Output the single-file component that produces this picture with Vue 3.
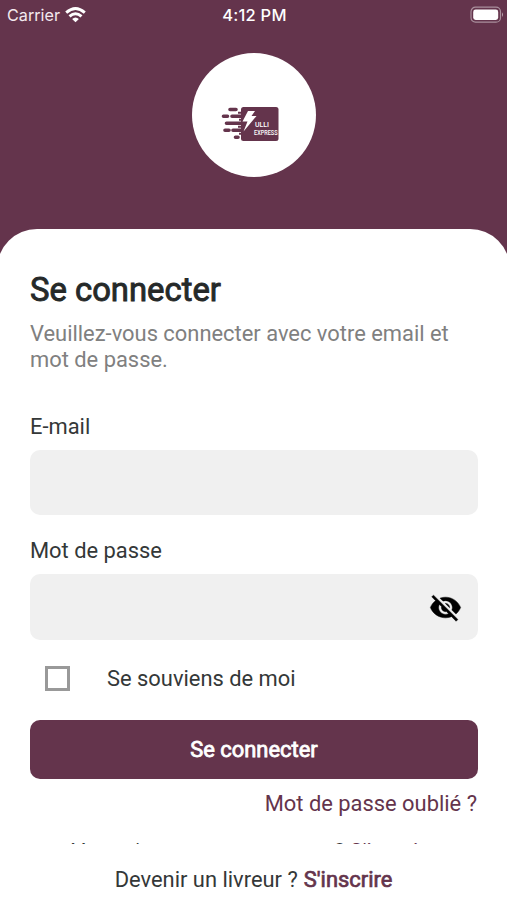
<script setup>
import { ref } from 'vue'

const email = ref('')
const password = ref('')
const remember = ref(false)
const visible = ref(false)
</script>

<template>
  <main class="screen">
    <header class="status">
      <div class="carrier">
        <span>Carrier</span>
        <svg width="21" height="16" viewBox="0 0 21 16" fill="none" stroke="#fff" stroke-width="2.9">
          <path d="M1.2 5.700Q10.500-2.600 19.800 5.700" />
          <path d="M4.500 9.400Q10.500 4.100 16.500 9.400" />
          <path d="M7.100 12Q10.500 9 13.900 12L10.500 15.300Z" fill="#fff" stroke="none" />
        </svg>
      </div>
      <span class="time">4:12 PM</span>
      <svg class="battery" width="34" height="18" viewBox="0 0 34 18">
        <rect x="1" y="1.2" width="29.5" height="15" rx="4.5" fill="none" stroke="#fff" stroke-opacity=".45" stroke-width="1.2" />
        <rect x="3.200" y="3.500" width="25" height="10.500" rx="2.4" fill="#fff" />
        <path d="M32 6.3Q34 8.7 32 11Z" fill="#fff" fill-opacity=".55" />
      </svg>
    </header>

    <div class="hero">
      <div class="logo">
        <svg width="58" height="36" viewBox="0 0 58 36">
          <g fill="none" stroke="#64344c" stroke-width="3.6" stroke-linecap="round">
            <path d="M9 3.5H15M2.5 10.3H6.5M11 10.3H20M5.500 17.300H20M4 24.200H8M12 24.200H20M14.500 31.300H17" />
          </g>
          <rect x="20" y="1" width="37.500" height="34" rx="2.5" fill="#64344c" />
          <path d="M20 6.800H17M20 13.700H18M20 20.800H17M20 27.700H18" stroke="#64344c" stroke-width="2" />
          <path d="M27 5H34L30.500 10H35.500L22.500 25.500L26.500 15.500H21.500Z" fill="#fff" />
          <text class="brand" x="34" y="20.500" textLength="14" lengthAdjust="spacingAndGlyphs">ULLI</text>
          <text class="brand" x="33" y="29" textLength="23.500" lengthAdjust="spacingAndGlyphs">EXPRESS</text>
        </svg>
      </div>
    </div>

    <form class="sheet" @submit.prevent>
      <h1>Se connecter</h1>
      <p class="intro">Veuillez-vous connecter avec votre email et mot de passe.</p>

      <label for="email">E-mail</label>
      <div class="field"><input id="email" v-model="email" type="email" /></div>

      <label for="password">Mot de passe</label>
      <div class="field">
        <input id="password" v-model="password" :type="visible ? 'text' : 'password'" />
        <button class="eye" type="button" @click="visible = !visible">
          <svg width="33" height="33" viewBox="0 0 24 24" stroke="#000" stroke-width=".35">
            <path d="M12 7c2.760 0 5 2.240 5 5 0 .650-.130 1.260-.360 1.830l2.920 2.920c1.510-1.260 2.700-2.890 3.430-4.750-1.730-4.390-6-7.500-11-7.500-1.400 0-2.740.250-3.980.700l2.160 2.160C10.740 7.130 11.350 7 12 7zM2 4.270l2.280 2.280.460.460C3.080 8.300 1.780 10.020 1 12c1.730 4.390 6 7.500 11 7.500 1.550 0 3.030-.300 4.380-.840l.420.420L19.730 22 21 20.730 3.270 3 2 4.270zM7.530 9.800l1.550 1.550c-.050.210-.080.430-.080.650 0 1.660 1.340 3 3 3 .220 0 .440-.030.650-.080l1.550 1.550c-.670.330-1.410.530-2.200.530-2.760 0-5-2.240-5-5 0-.790.200-1.530.530-2.200zm4.310-.780l3.150 3.150.020-.160c0-1.660-1.340-3-3-3l-.170.010z" />
          </svg>
        </button>
      </div>

      <label class="remember">
        <input v-model="remember" type="checkbox" />
        <span>Se souviens de moi</span>
      </label>

      <button class="submit" type="submit">Se connecter</button>
      <a class="forgot">Mot de passe oublié ?</a>
      <p class="signup">Vous n'avez pas un compte ? <a>S'inscrire</a></p>
    </form>

    <footer>
      <span>Devenir un livreur ?</span>
      <a>S'inscrire</a>
    </footer>
  </main>
</template>

<style>
body {
  margin: 0;
}
</style>

<style scoped>
.screen {
  box-sizing: border-box;
  width: 507px;
  height: 900px;
  display: flex;
  flex-direction: column;
  overflow: hidden;
  background: #64344c;
  color: #343838;
  font: 21.9px/26px Roboto, sans-serif;
}
.status {
  height: 30px;
  flex: none;
  display: grid;
  grid-template-columns: 1fr auto 1fr;
  align-items: center;
  padding: 0 3px 0 7px;
  color: #fff;
  font: 16.5px/30px Inter, sans-serif;
}
.carrier {
  display: flex;
  align-items: center;
  gap: 5px;
  font-size: 16.2px;
  color: #f3e9ef;
}
.time {
  margin-right: 2px;
  font-weight: 500;
  letter-spacing: 0.2px;
}
.battery {
  justify-self: end;
}
.hero {
  height: 199px;
  flex: none;
  box-sizing: border-box;
  padding-top: 23px;
}
.logo {
  width: 124px;
  height: 124px;
  margin: 0 auto;
  border-radius: 50%;
  background: #fff;
  display: flex;
  align-items: center;
  justify-content: center;
  box-sizing: border-box;
  padding: 17px 8px 0 0;
}
.brand {
  font: 500 7px Roboto, sans-serif;
  fill: #fff;
}
.sheet {
  height: 615px;
  flex: none;
  box-sizing: border-box;
  overflow: hidden;
  display: flex;
  flex-direction: column;
  margin: 0 -3px;
  padding: 42px 32px 0 33px;
  border-radius: 40px 40px 0 0;
  background: #fff;
}
h1 {
  margin: 0;
  font-size: 32.8px;
  line-height: 39px;
  font-weight: 400;
  color: #252929;
  -webkit-text-stroke: 0.9px #252929;
}
.intro {
  margin: 11px 0 41px;
  color: #808080;
}
label {
  height: 26px;
}
.field {
  height: 65px;
  flex: none;
  display: flex;
  align-items: center;
  box-sizing: border-box;
  margin: 10px 0 23px;
  padding: 0 16px;
  border-radius: 10px;
  background: #f0f0f0;
}
.field + label + .field {
  height: 66px;
}
.field input {
  flex: 1;
  min-width: 0;
  border: 0;
  padding: 0;
  outline: 0;
  background: transparent;
  font: inherit;
}
.eye {
  display: flex;
  border: 0;
  padding: 0;
  background: none;
}
.remember {
  display: flex;
  align-items: center;
  gap: 37px;
  margin: 3px 0 28px;
  padding-left: 15px;
}
.remember input {
  appearance: none;
  width: 25px;
  height: 25px;
  margin: 0 0 2px;
  border: 3px solid #999;
}
.submit {
  height: 59px;
  flex: none;
  border: 0;
  border-radius: 10px;
  background: #64344c;
  color: #fff;
  font: inherit;
  -webkit-text-stroke: 0.8px #fff;
}
.forgot {
  align-self: flex-end;
  margin: 12px 1px 0 0;
  color: #64344c;
}
.signup {
  margin: 22px 0 0;
  font-size: 21.4px;
  text-align: center;
  white-space: nowrap;
}
.signup a {
  color: #64344c;
}
footer {
  flex: 1;
  display: flex;
  align-items: center;
  justify-content: center;
  gap: 6px;
  padding-top: 15px;
  background: #fff;
}
footer a {
  color: #64344c;
  -webkit-text-stroke: 0.7px #64344c;
}
</style>
